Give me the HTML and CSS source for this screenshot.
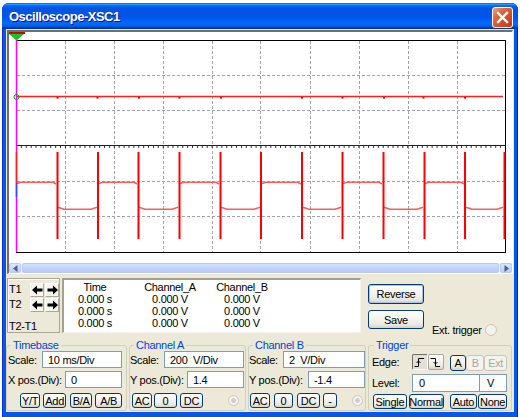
FILE: index.html
```html
<!DOCTYPE html>
<html>
<head>
<meta charset="utf-8">
<title>Oscilloscope-XSC1</title>
<link rel="stylesheet" href="styles.css">
</head>
<body>
<div class="window">
  <div class="titlebar">
    <span class="title">Oscilloscope-XSC1</span>
    <span class="close"><svg width="13" height="13" viewBox="0 0 13 13"><path d="M2 2L11 11M11 2L2 11" stroke="#fff" stroke-width="2.4" stroke-linecap="square"/></svg></span>
  </div>
  <div class="client">
    <div class="screen">
      <svg class="plot" width="503" height="231" viewBox="9 32 503 231">
        <defs>
          <pattern id="tk" x="16" y="146" width="4.89" height="2" patternUnits="userSpaceOnUse">
            <rect x="0" y="0" width="1" height="2" fill="#000"/>
          </pattern>
        </defs>
        <rect x="9" y="32" width="503" height="231" fill="#fff"/>
        <g stroke="#a4a4a4" stroke-width="1" stroke-dasharray="3 2" fill="none">
          <path d="M65.5 41V252M114.5 41V252M163.5 41V252M212.5 41V252M260.5 41V252M310.5 41V252M359.5 41V252M408.5 41V252M457.5 41V252"/>
          <path d="M17 75.5H505M17 110.5H505M17 181.5H505M17 216.5H505"/>
        </g>
        <rect x="16.5" y="40.5" width="489" height="212" fill="none" stroke="#000" stroke-width="1"/>
        <path d="M16 145.5H505" stroke="#222" stroke-width="1"/>
        <rect x="16" y="146" width="489" height="2" fill="url(#tk)" opacity="0.8"/>
        <!-- channel A -->
        <path d="M16 96.5H503" stroke="#ff1f1f" stroke-width="1.4"/>
        <g fill="#e00000">
          <rect x="56.5" y="97" width="2" height="1.6"/><rect x="96.5" y="97" width="2" height="1.6"/><rect x="138" y="97" width="2" height="1.6"/><rect x="178.5" y="97" width="2" height="1.6"/><rect x="220" y="97" width="2" height="1.6"/><rect x="301" y="97" width="2" height="1.6"/><rect x="341.5" y="97" width="2" height="1.6"/><rect x="383" y="97" width="2" height="1.6"/><rect x="422.5" y="97" width="2" height="1.6"/><rect x="464" y="97" width="2" height="1.6"/>
        </g>
        <!-- channel B plateaus -->
        <g stroke="#ff5c5c" stroke-width="1.6" fill="none">
          <path d="M17 183.5L21 182.3L53 182.3L56 184"/>
          <path d="M58 207.3L64 209.3L91 209.3L97 207.3"/>
          <path d="M99 183.5L103 182.3L134 182.3L137 184"/>
          <path d="M139 207.3L145 209.3L172 209.3L178 207.3"/>
          <path d="M180 183.5L184 182.3L216 182.3L219 184"/>
          <path d="M221 207.3L227 209.3L254 209.3L260 207.3"/>
          <path d="M262 183.5L266 182.3L298 182.3L301 184"/>
          <path d="M303 207.3L309 209.3L335 209.3L341 207.3"/>
          <path d="M343 183.5L347 182.3L379 182.3L382 184"/>
          <path d="M384 207.3L390 209.3L417 209.3L423 207.3"/>
          <path d="M425 183.5L429 182.3L461 182.3L464 184"/>
          <path d="M466 207.3L472 209.3L497 209.3L503 207.3"/>
        </g>
        <g stroke="#ff0000" stroke-width="2" fill="none">
          <path d="M57.5 152V239M98 152V239M138.5 152V239M179.5 152V239M220.5 152V239M261 152V239M302 152V239M342.5 152V239M383.5 152V239M424.5 152V239M465 152V239M504.5 152V239"/>
        </g>
        <!-- cursor -->
        <path d="M16.5 34V252" stroke="#ff00ff" stroke-width="1.5"/>
        <path d="M16.5 152V183" stroke="#ff2020" stroke-width="1.5"/>
        <path d="M16.5 183V197" stroke="#2a4cff" stroke-width="1.5"/>
        <circle cx="16.5" cy="97" r="2.5" fill="none" stroke="#00a800" stroke-width="1"/>
        <rect x="9" y="32" width="16" height="2" fill="#d40000"/>
        <polygon points="9,34 24,34 16.5,40.5" fill="#19c319"/>
      </svg>
      <div class="hscroll">
        <span class="sb-btn"><svg width="5" height="7" viewBox="0 0 5 7"><path d="M4.5 0V7L0 3.5Z" fill="#4d6185"/></svg></span>
        <span class="sb-thumb"></span>
        <span class="sb-btn"><svg width="5" height="7" viewBox="0 0 5 7"><path d="M0.5 0V7L5 3.5Z" fill="#4d6185"/></svg></span>
      </div>
    </div>

    <div class="readout">
      <div class="tpanel">
        <span class="tl t1">T1</span>
        <span class="arw"><svg width="11" height="10" viewBox="0 0 11 10"><path d="M0 5L5 0.5V3.5H10.5V6.5H5V9.5Z" fill="#000"/></svg></span>
        <span class="arw"><svg width="11" height="10" viewBox="0 0 11 10"><path d="M11 5L6 0.5V3.5H0.5V6.5H6V9.5Z" fill="#000"/></svg></span>
        <span class="tl t2">T2</span>
        <span class="arw"><svg width="11" height="10" viewBox="0 0 11 10"><path d="M0 5L5 0.5V3.5H10.5V6.5H5V9.5Z" fill="#000"/></svg></span>
        <span class="arw"><svg width="11" height="10" viewBox="0 0 11 10"><path d="M11 5L6 0.5V3.5H0.5V6.5H6V9.5Z" fill="#000"/></svg></span>
        <span class="tl td">T2-T1</span>
      </div>
      <div class="data">
        <span>Time</span><span>Channel_A</span><span>Channel_B</span>
        <span>0.000 s</span><span>0.000 V</span><span>0.000 V</span>
        <span>0.000 s</span><span>0.000 V</span><span>0.000 V</span>
        <span>0.000 s</span><span>0.000 V</span><span>0.000 V</span>
      </div>
      <div class="actions">
        <span class="btn big def">Reverse</span>
        <span class="btn big save">Save</span>
      </div>
      <div class="ext">
        <span>Ext. trigger</span>
        <span class="radio big-radio"></span>
      </div>
    </div>

    <div class="controls">
      <fieldset class="grp tb">
        <legend>Timebase</legend>
        <div class="row"><span>Scale:</span><span class="field w80">10 ms/Div</span></div>
        <div class="row"><span>X pos.(Div):</span><span class="field w57">0</span></div>
        <div class="brow">
          <span class="btn sm b-yt">Y/T</span><span class="btn sm b-add">Add</span><span class="btn sm b-ba">B/A</span><span class="btn sm b-ab">A/B</span>
        </div>
      </fieldset>
      <fieldset class="grp ca">
        <legend>Channel A</legend>
        <div class="row"><span>Scale:</span><span class="field w80">200  V/Div</span></div>
        <div class="row"><span>Y pos.(Div):</span><span class="field w57">1.4</span></div>
        <div class="brow">
          <span class="btn sm b-ac">AC</span><span class="btn sm b-0">0</span><span class="btn sm b-dc">DC</span>
          <span class="radio dot"></span>
        </div>
      </fieldset>
      <fieldset class="grp cb">
        <legend>Channel B</legend>
        <div class="row"><span>Scale:</span><span class="field w82">2  V/Div</span></div>
        <div class="row"><span>Y pos.(Div):</span><span class="field w57">-1.4</span></div>
        <div class="brow">
          <span class="btn sm b-acb">AC</span><span class="btn sm b-0b">0</span><span class="btn sm b-dcb">DC</span><span class="btn sm b-minus">-</span>
          <span class="radio dot"></span>
        </div>
      </fieldset>
      <fieldset class="grp tr">
        <legend>Trigger</legend>
        <div class="trow1">
          <span class="lbl">Edge:</span>
          <span class="btn edge pressed"><svg width="11" height="11" viewBox="0 0 11 11"><path d="M0.5 9.5H4.5V1.5H10" stroke="#000" stroke-width="1" fill="none"/><path d="M2.5 6L4.5 4L6.5 6" stroke="#000" stroke-width="1" fill="none"/></svg></span>
          <span class="btn edge"><svg width="11" height="11" viewBox="0 0 11 11"><path d="M0.5 1.5H5.5V9.5H10" stroke="#000" stroke-width="1" fill="none"/><path d="M3.5 5L5.5 7L7.5 5" stroke="#000" stroke-width="1" fill="none"/></svg></span>
          <span class="btn sel b-a">A</span><span class="btn sel dis b-b">B</span><span class="btn sel dis b-ext">Ext</span>
        </div>
        <div class="trow2">
          <span class="lbl">Level:</span>
          <span class="field lvl">0</span><span class="field unit">V</span>
        </div>
        <div class="trow3">
          <span class="btn sm b-single">Single</span><span class="btn sm b-normal">Normal</span><span class="btn sm b-auto">Auto</span><span class="btn sm b-none">None</span>
        </div>
      </fieldset>
    </div>
  </div>
</div>
</body>
</html>
```

FILE: styles.css
```css
html, body {
  margin: 0;
  padding: 0;
}
body {
  width: 520px;
  height: 417px;
  overflow: hidden;
  background: #fff;
  font-family: "Liberation Sans", Arial, sans-serif;
  font-size: 11px;
  letter-spacing: -0.3px;
  color: #000;
}
.window {
  margin: 3px 0 0 2px;
  width: 516px;
  background: #0758e4;
  border-radius: 7px 7px 0 0;
  padding-bottom: 8px;
  box-shadow: inset 1px 0 #0831d9, inset -1px 0 #001ea0;
}
.titlebar {
  height: 26px;
  display: flex;
  align-items: center;
  padding: 0 5px 0 7px;
  border-radius: 7px 7px 0 0;
  background: linear-gradient(to bottom, #0058ee 0%, #3593ff 4%, #288eff 6%, #127dff 8%, #036ffc 10%, #0262ee 14%, #0057e5 20%, #0054e3 24%, #0055eb 56%, #005bf5 66%, #026afe 76%, #0062ef 86%, #0052d6 92%, #0040ab 94%, #003092 100%);
}
.title {
  flex: 1;
  color: #fff;
  font-weight: bold;
  font-size: 13px;
  letter-spacing: -0.5px;
  text-shadow: 1px 1px #0f1089;
  padding-top: 1px;
}
.close {
  width: 19px;
  height: 19px;
  margin-top: 2px;
  border: 1px solid #fff;
  border-radius: 3px;
  background: linear-gradient(135deg, #f0a48a 0%, #e06a45 30%, #d4502c 60%, #bc3a18 100%);
  display: flex;
  align-items: center;
  justify-content: center;
}
.close svg { display: block; }

.client {
  margin: 0 4px;
  height: 383px;
  box-sizing: border-box;
  background: #ece9d8;
  padding-top: 1px;
}

/* scope screen */
.screen {
  margin: 0 1px;
  border-style: solid;
  border-width: 2px 1px 1px 2px;
  border-color: #6f6f6f #ffffff #ffffff #6f6f6f;
}
.plot { display: block; }
.hscroll {
  display: flex;
  height: 10px;
  background: #eef3fd;
}
.sb-btn {
  width: 12px;
  box-sizing: border-box;
  border: 1px solid #b7cbf5;
  border-radius: 2px;
  background: linear-gradient(to bottom, #dbe6fe, #b9cdf9);
  display: flex;
  align-items: center;
  justify-content: center;
}
.sb-btn svg { display: block; }
.sb-thumb {
  flex: 1;
  margin: 0 1px;
  box-sizing: border-box;
  border: 1px solid #b6c9f4;
  border-radius: 2px;
  background: linear-gradient(to bottom, #d3e0fd, #c3d4fb 50%, #b5cbf7);
}

/* readout row */
.readout {
  display: flex;
  margin-top: 4px;
  height: 55px;
  padding-left: 1px;
}
.tpanel {
  width: 53px;
  box-sizing: border-box;
  border: 1px solid #aca899;
  box-shadow: inset 1px 1px #fff;
  display: grid;
  grid-template-columns: 20px 14px 14px;
  grid-template-rows: 14px 14px auto;
  column-gap: 1px;
  row-gap: 1px;
  padding: 4px 0 0 1px;
}
.tl { line-height: 12px; white-space: nowrap; }
.t1 { align-self: center; margin-top: -2px; }
.t2 { align-self: center; margin-top: -3px; }
.td { grid-column: 1 / -1; margin-top: 7px; }
.arw {
  box-sizing: border-box;
  border: 1px solid;
  border-color: #fff #aca899 #aca899 #fff;
  background: #f5f4ef;
  display: flex;
  align-items: center;
  justify-content: center;
}
.arw svg { display: block; }
.data {
  margin-left: 2px;
  width: 299px;
  box-sizing: border-box;
  background: #fff;
  border-style: solid;
  border-width: 2px 1px 1px 2px;
  border-color: #a3a094 #f4f3ee #f4f3ee #a3a094;
  display: grid;
  grid-template-columns: 62px 88px 56px;
  grid-auto-rows: 12px;
  align-content: start;
  padding-top: 1px;
  line-height: 12px;
  text-align: center;
  white-space: nowrap;
}
.actions {
  margin-left: 7px;
  display: flex;
  flex-direction: column;
  padding-top: 6px;
  gap: 6px;
}
.btn {
  box-sizing: border-box;
  border: 1px solid #003c74;
  border-radius: 3px;
  background: linear-gradient(to bottom, #ffffff 0%, #f5f4f0 45%, #ebe8df 80%, #d6d0c5 100%);
  display: flex;
  align-items: center;
  justify-content: center;
  white-space: nowrap;
  color: #000;
}
.big { width: 56px; height: 20px; }
.save { height: 19px; }
.def { box-shadow: inset 0 0 0 1px #a9c2ec; }
.ext {
  margin-left: 8px;
  padding-top: 46px;
  display: flex;
  align-items: center;
  height: 12px;
}
.radio {
  box-sizing: border-box;
  border: 1px solid #cac8bb;
  border-radius: 50%;
  background: #f4f3ee;
}
.big-radio {
  width: 12px;
  height: 12px;
  margin-left: 3px;
}

/* control group boxes */
.controls {
  display: flex;
  gap: 2px;
  margin-top: 7px;
}
.grp {
  margin: 0;
  height: 71px;
  box-sizing: border-box;
  border: 1px solid #d0d0bf;
  border-radius: 3px;
  padding: 0 0 1px 0;
  min-width: 0;
}
.grp legend {
  color: #0046d5;
  line-height: 11px;
  padding: 0 2px;
  margin-left: 4px;
}
.tb { width: 121px; padding-left: 1px; padding-right: 4px; }
.tb legend { margin-left: 3px; }
.ca { width: 117px; padding-right: 1px; }
.cb { width: 118px; }
.tr { width: 144px; padding-left: 3px; padding-right: 4px; }
.tr legend { margin-left: 2px; }

.row {
  display: flex;
  align-items: center;
  height: 17px;
  white-space: nowrap;
}
.row + .row { margin-top: 3px; }
.field {
  box-sizing: border-box;
  height: 17px;
  border: 1px solid #7f9db9;
  background: #fff;
  padding-left: 5px;
  display: flex;
  align-items: center;
  white-space: pre;
}
.row .field { margin-left: auto; }
.w80 { width: 80px; }
.w82 { width: 82px; }
.w57 { width: 57px; }

.brow {
  display: flex;
  align-items: center;
  height: 15px;
  margin-top: 5px;
}
.sm { height: 15px; }
.b-yt { width: 21px; margin-left: 12px; }
.b-add { width: 24px; margin-left: 3px; }
.b-ba { width: 23px; margin-left: 4px; }
.b-ab { width: 28px; margin-left: 3px; }
.b-ac { width: 20px; margin-left: 2px; }
.b-0 { width: 23px; margin-left: 2px; }
.b-dc { width: 23px; margin-left: 3px; }
.b-acb { width: 20px; margin-left: 1px; }
.b-0b { width: 19px; margin-left: 4px; }
.b-dcb { width: 23px; margin-left: 4px; }
.b-minus { width: 14px; margin-left: 3px; }
.dot {
  width: 11px;
  height: 11px;
  margin-left: auto;
  margin-right: 5px;
  background: radial-gradient(circle, #cfcdc2 0 2px, #f4f3ee 2.5px);
}
.cb .dot { margin-right: 2px; }

.lbl { width: 40px; flex: none; }
.trow1 {
  display: flex;
  align-items: center;
  height: 16px;
  margin-top: 3px;
}
.edge { width: 16px; height: 16px; border-radius: 2px; border-color: #aca899; }
.edge svg { display: block; }
.pressed {
  background: #e2e0d6;
  border-color: #716f64 #fff #fff #716f64;
}
.sel { height: 16px; margin-top: 1px; }
.b-a { width: 17px; margin-left: 6px; }
.b-b { width: 18px; }
.b-ext { width: 23px; }
.dis {
  color: #aca899;
  border-color: #c9c7ba;
  background: #f4f3ee;
}
.trow2 {
  display: flex;
  align-items: center;
  height: 18px;
  margin-top: 4px;
}
.trow2 .field { height: 18px; }
.lvl { width: 68px; padding-left: 6px; }
.unit { width: 27px; padding-left: 7px; border-left: none; }
.trow3 {
  display: flex;
  align-items: center;
  height: 15px;
  margin-top: 2px;
  margin-left: 1px;
}
.b-single { width: 34px; }
.b-normal { width: 35px; margin-left: 2px; }
.b-auto { width: 28px; margin-left: 6px; }
.b-none { width: 29px; margin-left: 1px; }
```
